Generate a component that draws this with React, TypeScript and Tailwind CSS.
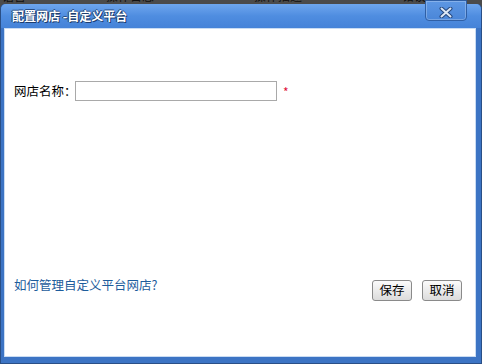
import React from "react";

const font = { fontFamily: '"Noto Sans CJK SC", "Noto Sans", sans-serif' };

export default function App() {
  return (
    <div
      className="w-[482px] h-[364px] bg-[#4b4b4b] flex flex-col overflow-hidden"
      style={font}
    >
      <div className="h-[4px] relative overflow-hidden">
        <div className="absolute left-0 top-[-11px] flex gap-[60px] pl-[2px] text-[12px] leading-[14px] text-[#111]">
          <span>语言</span>
          <span className="ml-[20px]">操作日志</span>
          <span className="ml-[40px]">操作描述</span>
          <span className="ml-[40px]">错误排行</span>
        </div>
      </div>
      <div className="flex-1 flex flex-col rounded-t-[5px] bg-[#3f78c9] border-l-[1px] border-r-[1px] border-b-[1px] border-[#2a4f86] relative">
        <div className="h-[24px] flex items-center pl-[11px] rounded-t-[5px] bg-gradient-to-b from-[#6ea6ee] via-[#4f8de0] to-[#4583d8]">
          <span
            className="text-white font-bold text-[12px]"
            style={{ textShadow: "1px 1px 0 #1d3e70, -1px 0 0 #1d3e70, 0 -1px 0 #2a4f86" }}
          >
            配置网店 -自定义平台
          </span>
        </div>
        <div className="absolute right-[14px] top-[-4px] w-[42px] h-[21px] rounded-b-[4px] border border-[#2f5fa5] bg-gradient-to-b from-[#5d97e4] to-[#4a86d8] flex items-center justify-center shadow-[inset_0_0_0_1px_rgba(255,255,255,0.25)]">
          <svg width="14" height="11" viewBox="0 0 14 11" className="mt-[3px]">
            <path
              d="M2.5 1.5 L11.5 9.5 M11.5 1.5 L2.5 9.5"
              stroke="#24467c"
              strokeWidth="4"
              strokeLinecap="round"
            />
            <path
              d="M2.5 1.5 L11.5 9.5 M11.5 1.5 L2.5 9.5"
              stroke="#dbe7f6"
              strokeWidth="2"
              strokeLinecap="round"
            />
          </svg>
        </div>
        <div className="flex-1 flex px-[3px] pb-[6px] pr-[5px] bg-[#3c74c4]">
          <div className="flex-1 bg-white border border-[#c9dcf3] flex flex-col px-[9px] pt-[52px] pb-[55px]">
            <div className="flex items-center h-[20px] text-[12.5px] text-black">
              <span className="w-[61px] shrink-0 whitespace-nowrap">网店名称：</span>
              <div className="w-[202px] h-[20px] shrink-0 border border-[#a9a9a9] bg-white" />
              <span className="ml-[6px] text-[#e0103a] text-[12px] leading-none mt-[2px]">*</span>
            </div>
            <div className="flex-1" />
            <div className="flex items-start justify-between">
              <span className="text-[12.5px] text-[#1d5c9c] leading-[14px] mt-[-2px] whitespace-nowrap">
                如何管理自定义平台网店?
              </span>
              <div className="flex gap-[10px] mr-[4px]">
                <button className="w-[40px] h-[21px] rounded-[3px] border border-[#8a8a8a] bg-gradient-to-b from-[#fbfbfb] to-[#dcdcdc] text-[12.5px] text-black leading-none whitespace-nowrap">
                  保存
                </button>
                <button className="w-[40px] h-[21px] rounded-[3px] border border-[#8a8a8a] bg-gradient-to-b from-[#fbfbfb] to-[#dcdcdc] text-[12.5px] text-black leading-none whitespace-nowrap">
                  取消
                </button>
              </div>
            </div>
          </div>
        </div>
      </div>
    </div>
  );
}
